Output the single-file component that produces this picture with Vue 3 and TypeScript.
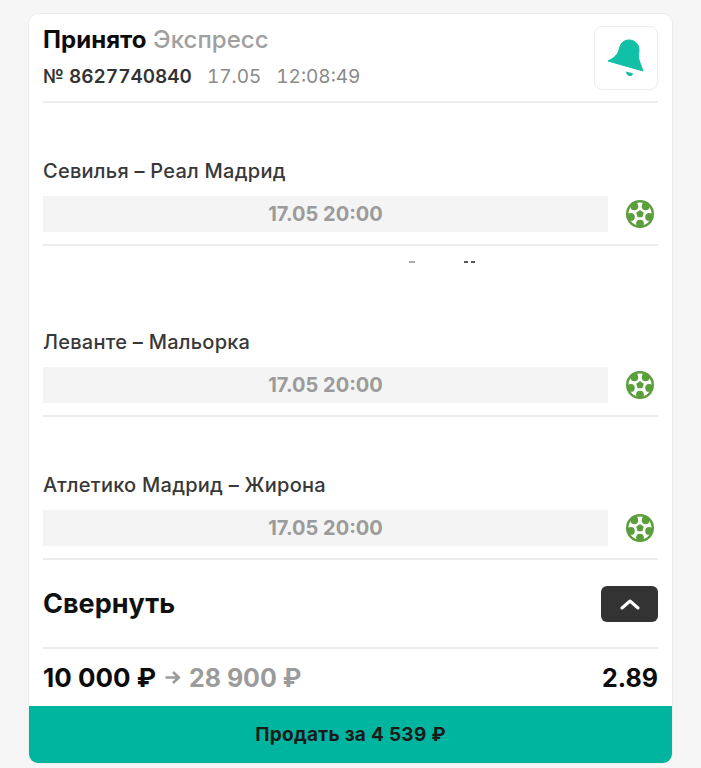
<script setup lang="ts">
interface Match { teams: string; time: string; tall?: boolean }
const matches: Match[] = [
  { teams: 'Севилья – Реал Мадрид', time: '17.05 20:00' },
  { teams: 'Леванте – Мальорка', time: '17.05 20:00', tall: true },
  { teams: 'Атлетико Мадрид – Жирона', time: '17.05 20:00' },
]
const polar = (r: number, deg: number) => {
  const a = (deg * Math.PI) / 180
  return { x: 14 + r * Math.sin(a), y: 14 - r * Math.cos(a) }
}
const blobs = [36, 108, 180, 252, 324].map((d) => polar(9.6, d))
const pentagon = [0, 72, 144, 216, 288]
  .map((d) => polar(4, d))
  .map((p) => `${p.x.toFixed(2)},${p.y.toFixed(2)}`)
  .join(' ')
</script>

<template>
  <div class="page">
    <section class="card">
      <div class="body">
        <header class="head">
          <div class="head-text">
            <div class="title"><b>Принято</b> <span>Экспресс</span></div>
            <div class="meta"><b>№ 8627740840</b><span>17.05</span><span>12:08:49</span></div>
          </div>
          <button class="bell" aria-label="Уведомления">
            <svg width="40" height="40" viewBox="0 0 40 40">
              <g fill="#11c0a6">
                <path d="M2 23 C8 20 12 17 13.5 10 C15 4 19 2 23 2 C29 2 33 6.5 33 11.5 C33 15 32 18 33 22 L37 33 Z" stroke="#11c0a6" stroke-width="1" stroke-linejoin="round" />
                <path d="M20 33.5 L27 35.2 C26.5 37.5 25 38.3 23.5 38 C21.5 37.7 20 36 20 33.5 Z" />
              </g>
            </svg>
          </button>
        </header>

        <article v-for="m in matches" :key="m.teams" class="match" :class="{ tall: m.tall }">
          <div v-if="m.tall" class="clip"><i class="d1"></i><i class="d2"></i><i class="d3"></i></div>
          <div class="teams">{{ m.teams }}</div>
          <div class="row">
            <div class="time">{{ m.time }}</div>
            <svg class="ball" width="28" height="28" viewBox="0 0 28 28">
              <circle cx="14" cy="14" r="14" fill="#5b9e3c" />
              <circle cx="14" cy="14" r="11.5" fill="#fff" />
              <circle v-for="(b, i) in blobs" :key="i" :cx="b.x" :cy="b.y" r="3.9" fill="#5b9e3c" />
              <polygon :points="pentagon" fill="#5b9e3c" />
            </svg>
          </div>
        </article>

        <div class="collapse">
          <h2>Свернуть</h2>
          <button class="toggle" aria-label="Свернуть">
            <svg width="20" height="12" viewBox="0 0 20 12">
              <path d="M2 10 L10 3 L18 10" fill="none" stroke="#fff" stroke-width="3" stroke-linecap="round" stroke-linejoin="round" />
            </svg>
          </button>
        </div>

        <div class="sum">
          <div class="amounts">
            <b>10 000 ₽</b>
            <svg class="arrow" width="17" height="15" viewBox="0 0 17 15">
              <path d="M1.5 7.5 H14.5 M9 2 L14.8 7.5 L9 13" fill="none" stroke="#9b9b9b" stroke-width="2.6" />
            </svg>
            <span>28 900 ₽</span>
          </div>
          <b class="coef">2.89</b>
        </div>
      </div>
      <button class="sell">Продать за 4 539 ₽</button>
    </section>
  </div>
</template>

<style>
html, body { margin: 0; background: #f6f6f6; }
</style>

<style scoped>
.page {
  height: 768px;
  box-sizing: border-box;
  padding: 14px 29px 5px;
  font-family: Inter, "Noto Sans", sans-serif;
  background: #f6f6f6;
  overflow: hidden;
}
.card {
  box-sizing: border-box;
  height: 749px;
  display: flex;
  flex-direction: column;
  background: #fff;
  border-radius: 9px;
  box-shadow: 0 0 0 1px #ececec;
  overflow: hidden;
}
.body {
  flex: 1;
  padding: 0 14px;
  display: flex;
  flex-direction: column;
}
.head {
  height: 89px;
  box-sizing: border-box;
  display: flex;
  justify-content: space-between;
  border-bottom: 2px solid #ececec;
}
.head-text { padding-top: 12px; }
.title {
  font-size: 24px;
  line-height: 28px;
  letter-spacing: 0.05px;
  color: #a0a0a0;
  font-weight: 500;
}
.title b { color: #0b0b0b; font-weight: 700; }
.meta {
  display: flex;
  gap: 15px;
  margin-top: 11px;
  font-size: 19px;
  line-height: 24px;
  font-variant-numeric: tabular-nums;
  color: #8a8a8a;
}
.meta b { font-weight: 600; color: #333; }
.bell {
  width: 64px;
  height: 64px;
  margin: 12px 0 0;
  padding: 0;
  display: flex;
  align-items: center;
  justify-content: center;
  background: #fff;
  border: 1px solid #ececec;
  border-radius: 8px;
}
.match {
  height: 143px;
  box-sizing: border-box;
  padding-top: 55px;
  border-bottom: 2px solid #ececec;
}
.match.tall { height: 171px; padding-top: 0; }
.clip {
  height: 83px;
  display: flex;
  align-items: flex-start;
  padding-top: 15px;
  box-sizing: border-box;
}
.clip i { display: block; height: 2px; background: #555; }
.clip .d1 { width: 6px; margin-left: 366px; background: #aaa; }
.clip .d2 { width: 4px; margin-left: 49px; }
.clip .d3 { width: 4px; margin-left: 3px; }
.teams {
  font-size: 20px;
  line-height: 26px;
  font-weight: 500;
  letter-spacing: 0.25px;
  color: #383838;
}
.row {
  display: flex;
  align-items: center;
  justify-content: space-between;
  margin-top: 12px;
  padding-right: 4px;
}
.time {
  width: 565px;
  height: 36px;
  display: flex;
  align-items: center;
  justify-content: center;
  background: #f4f4f4;
  font-size: 20px;
  font-weight: 700;
  color: #9b9b9b;
}
.collapse {
  height: 89px;
  box-sizing: border-box;
  display: flex;
  align-items: center;
  justify-content: space-between;
  border-bottom: 2px solid #ececec;
}
.collapse h2 {
  margin: 0;
  font-size: 27px;
  font-weight: 700;
  color: #111;
}
.toggle {
  width: 57px;
  height: 36px;
  padding: 0;
  display: flex;
  align-items: center;
  justify-content: center;
  background: #333;
  border: 0;
  border-radius: 6px;
}
.sum {
  flex: 1;
  display: flex;
  align-items: center;
  justify-content: space-between;
  font-size: 25px;
  color: #0b0b0b;
}
.sum b { font-weight: 700; }
.amounts { display: flex; align-items: center; gap: 8px; }
.amounts b { font-size: 26px; }
.amounts span { color: #9b9b9b; font-weight: 700; }
.sell {
  height: 57px;
  flex: none;
  border: 0;
  background: #00b59f;
  font-family: inherit;
  font-size: 19px;
  font-weight: 700;
  letter-spacing: 0.3px;
  color: #1a1a1a;
}
</style>
